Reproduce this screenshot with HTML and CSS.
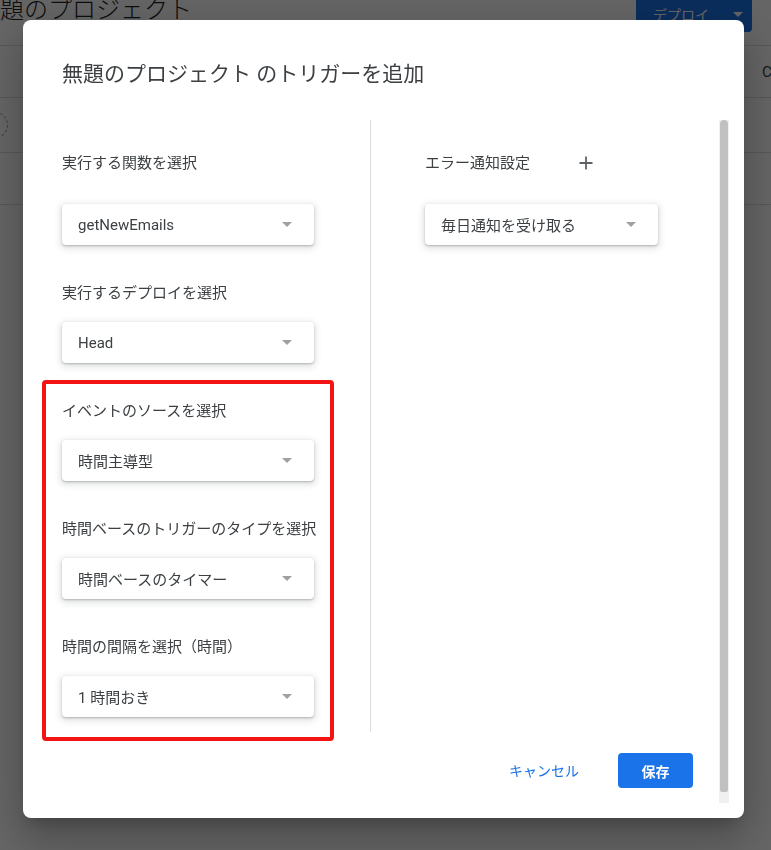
FILE: index.html
```html
<!DOCTYPE html>
<html lang="ja">
<head>
<meta charset="utf-8">
<title>トリガーを追加</title>
<link rel="stylesheet" href="styles.css">
</head>
<body>
<div class="page">
  <header class="topbar">
    <h1 class="project-title">無題のプロジェクト</h1>
    <button class="deploy">デプロイ<span class="deploy-caret"></span></button>
  </header>
  <div class="toolbar"><span class="tb-text">Co</span></div>
  <div class="row row-a"><span class="ring"></span></div>
  <div class="row row-b"></div>
</div>

<div class="overlay"></div>

<div class="dialog">
  <h2 class="dlg-title">無題のプロジェクト のトリガーを追加</h2>
  <div class="dlg-body">
    <div class="dlg-scroll">
      <div class="cols">
        <div class="col col-left">
          <div class="field field-first">
            <div class="label">実行する関数を選択</div>
            <div class="select"><span class="value">getNewEmails</span><i class="arrow"></i></div>
          </div>
          <div class="field">
            <div class="label">実行するデプロイを選択</div>
            <div class="select"><span class="value">Head</span><i class="arrow"></i></div>
          </div>
          <div class="highlight">
            <div class="field field-inbox">
              <div class="label">イベントのソースを選択</div>
              <div class="select"><span class="value">時間主導型</span><i class="arrow"></i></div>
            </div>
            <div class="field">
              <div class="label">時間ベースのトリガーのタイプを選択</div>
              <div class="select"><span class="value">時間ベースのタイマー</span><i class="arrow"></i></div>
            </div>
            <div class="field">
              <div class="label">時間の間隔を選択（時間）</div>
              <div class="select"><span class="value">1 時間おき</span><i class="arrow"></i></div>
            </div>
          </div>
        </div>
        <div class="divider"></div>
        <div class="col col-right">
          <div class="label-row">
            <div class="label">エラー通知設定</div>
            <svg class="plus" width="14" height="14" viewBox="0 0 14 14" aria-hidden="true">
              <path d="M7 0.5V13.5M0.5 7H13.5" stroke="#5f6368" stroke-width="1.8" fill="none"/>
            </svg>
          </div>
          <div class="select select-right"><span class="value">毎日通知を受け取る</span><i class="arrow"></i></div>
        </div>
      </div>
      <div class="footer">
        <button class="btn-cancel">キャンセル</button>
        <button class="btn-save">保存</button>
      </div>
    </div>
    <div class="scrollbar"><div class="thumb"></div></div>
  </div>
</div>
</body>
</html>
```

FILE: styles.css
```css
html, body {
  margin: 0;
  padding: 0;
}

body {
  width: 771px;
  height: 850px;
  overflow: hidden;
  background: #ffffff;
  font-family: Roboto, "Noto Sans CJK JP", "Noto Sans", sans-serif;
  color: #202124;
}

/* ---------- background page ---------- */
.page {
  width: 771px;
}

.topbar {
  display: flex;
  justify-content: space-between;
  align-items: flex-start;
  height: 45px;
  border-bottom: 1px solid #dadce0;
  overflow: hidden;
}

.project-title {
  margin: -6px 0 0 -24px;
  font-size: 24px;
  line-height: 32px;
  font-weight: 300;
  color: #202124;
  white-space: nowrap;
}

.deploy {
  display: flex;
  align-items: center;
  margin: -4px 19px 0 0;
  width: 116px;
  height: 36px;
  padding: 0 0 0 17px;
  border: none;
  border-radius: 4px;
  background: #1a73e8;
  color: #ffffff;
  font-family: Roboto, "Noto Sans CJK JP", sans-serif;
  font-size: 14px;
}

.deploy-caret {
  margin-left: 24px;
  width: 0;
  height: 0;
  border-left: 5px solid transparent;
  border-right: 5px solid transparent;
  border-top: 5px solid #ffffff;
}

.toolbar {
  height: 51px;
  border-bottom: 1px solid #dadce0;
  display: flex;
  align-items: center;
  padding-left: 762px;
  overflow: hidden;
  white-space: nowrap;
  font-size: 15px;
  color: #3c4043;
}

.row {
  border-bottom: 1px solid #dadce0;
  overflow: hidden;
}

.row-a {
  height: 54px;
  display: flex;
  align-items: center;
}

.row-b {
  height: 51px;
}

.ring {
  display: block;
  margin-left: -18px;
  width: 24px;
  height: 24px;
  border: 1px dashed #9aa0a6;
  border-radius: 50%;
}

/* ---------- overlay ---------- */
.overlay {
  position: fixed;
  inset: 0;
  background: rgba(0, 0, 0, 0.6);
}

/* ---------- dialog ---------- */
.dialog {
  position: absolute;
  left: 23px;
  top: 20px;
  width: 721px;
  height: 798px;
  background: #ffffff;
  border-radius: 8px;
  box-shadow: 0 11px 15px -7px rgba(0, 0, 0, 0.2),
              0 24px 38px 3px rgba(0, 0, 0, 0.14),
              0 9px 46px 8px rgba(0, 0, 0, 0.12);
  display: flex;
  flex-direction: column;
}

.dlg-title {
  margin: 0;
  padding: 40px 0 0 39px;
  font-size: 21px;
  line-height: 28px;
  font-weight: 400;
  color: #3c4043;
  white-space: nowrap;
}

.dlg-body {
  margin-top: 32px;
  height: 683px;
  display: flex;
}

.dlg-scroll {
  flex: 1;
  display: flex;
  flex-direction: column;
}

.cols {
  display: flex;
  height: 612px;
}

.col-left {
  width: 252px;
  padding: 0 56px 0 39px;
}

.divider {
  width: 1px;
  background: #dadce0;
}

.col-right {
  padding-left: 54px;
}

.label {
  font-size: 15px;
  line-height: 20px;
  color: #3c4043;
  white-space: nowrap;
}

.field {
  margin-top: 38px;
}

.field .label {
  margin-bottom: 19px;
}

.field-first {
  margin-top: 33px;
}

.field-first .label {
  margin-bottom: 31px;
}

.field-inbox {
  margin-top: 0;
}

.highlight {
  margin: 17px -20px 0;
  padding: 17px 16px 20px;
  border: 4px solid #f21414;
  border-radius: 4px;
}

.select {
  display: flex;
  align-items: center;
  justify-content: space-between;
  height: 41px;
  padding: 0 22px 0 16px;
  background: #ffffff;
  border-radius: 4px;
  box-shadow: 0 1px 2px 0 rgba(60, 64, 67, 0.3),
              0 2px 6px 2px rgba(60, 64, 67, 0.15);
}

.value {
  font-size: 15px;
  color: #3c4043;
  white-space: nowrap;
}

.arrow {
  width: 0;
  height: 0;
  border-left: 5.5px solid transparent;
  border-right: 5.5px solid transparent;
  border-top: 5px solid #a0a0a0;
}

.label-row {
  display: flex;
  align-items: center;
  padding-top: 33px;
}

.plus {
  margin-left: 49px;
}

.select-right {
  margin-top: 31px;
  width: 195px;
}

.footer {
  margin-top: 21px;
  display: flex;
  justify-content: flex-end;
  align-items: center;
  padding-right: 26px;
}

.btn-cancel {
  margin-right: 39px;
  padding: 0;
  border: none;
  background: transparent;
  color: #1a73e8;
  font-family: Roboto, "Noto Sans CJK JP", sans-serif;
  font-size: 14px;
  line-height: 20px;
}

.btn-save {
  width: 75px;
  height: 35px;
  border: none;
  border-radius: 4px;
  background: #1a73e8;
  color: #ffffff;
  font-family: Roboto, "Noto Sans CJK JP", sans-serif;
  font-size: 14px;
  font-weight: 700;
}

.scrollbar {
  width: 10px;
  margin-right: 15px;
  background: #f0f0f0;
}

.thumb {
  height: 672px;
  margin: 0 1px;
  background: #c1c1c1;
  border-radius: 4px 4px 2px 2px;
}
```
